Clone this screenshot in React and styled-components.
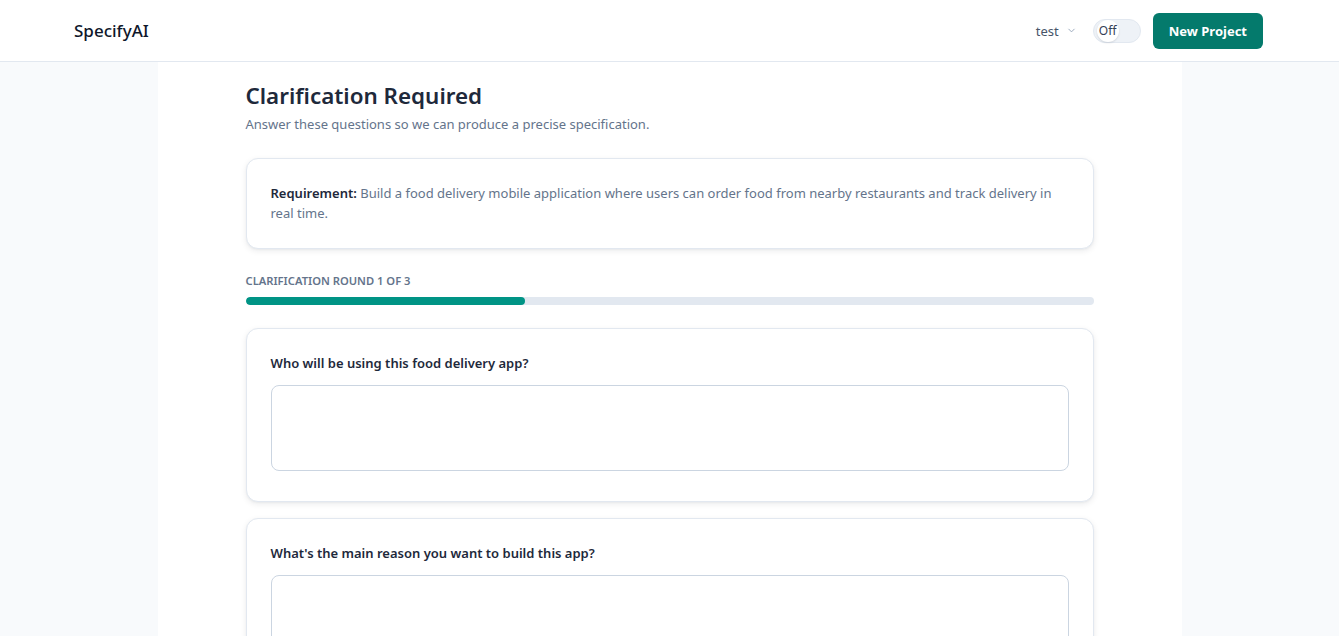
import React from "react";
import styled, { createGlobalStyle } from "styled-components";

const Global = createGlobalStyle`
  html, body { margin: 0; padding: 0; }
  body {
    font-family: "Noto Sans", "Open Sans", sans-serif;
    background: #f8fafc;
    color: #1e293b;
  }
  * { box-sizing: border-box; }
`;

const Header = styled.header`
  height: 62px;
  background: #ffffff;
  border-bottom: 1px solid #e2e8f0;
  display: flex;
  align-items: center;
  justify-content: space-between;
  padding: 0 76px 0 74px;
`;

const Logo = styled.div`
  font-size: 17px;
  font-weight: 500;
  color: #0f172a;
`;

const Right = styled.div`
  display: flex;
  align-items: center;
  gap: 12px;
`;

const UserMenu = styled.button`
  display: flex;
  align-items: center;
  gap: 7px;
  background: none;
  border: none;
  font-family: inherit;
  font-size: 13px;
  color: #475569;
  padding: 0;
  margin-right: 4px;
  cursor: pointer;
`;

const Toggle = styled.div`
  position: relative;
  width: 48px;
  height: 24px;
  border-radius: 12px;
  background: #eef2f7;
  border: 1px solid #e2e8f0;
`;

const Knob = styled.div`
  position: absolute;
  left: 3px;
  top: 0px;
  width: 22px;
  height: 22px;
  border-radius: 50%;
  background: #ffffff;
  box-shadow: 0 1px 2px rgba(15, 23, 42, 0.12);
  display: flex;
  align-items: center;
  justify-content: center;
  font-size: 12px;
  color: #334155;
`;

const PrimaryButton = styled.button`
  height: 36px;
  padding: 0 16px;
  border: none;
  border-radius: 6px;
  background: #047a6c;
  color: #ffffff;
  font-family: inherit;
  font-size: 13px;
  font-weight: 700;
  cursor: pointer;
`;

const Main = styled.main`
  width: 1024px;
  margin: 0 auto;
  background: #ffffff;
  padding: 19px 88px 40px;
  min-height: 600px;
`;

const Title = styled.h1`
  margin: 0;
  font-size: 22.4px;
  font-weight: 600;
  color: #1e293b;
  line-height: 30px;
`;

const Subtitle = styled.p`
  margin: 3px 0 0;
  font-size: 13px;
  color: #64748b;
  line-height: 20px;
`;

const Card = styled.section`
  background: #ffffff;
  border: 1px solid #e2e8f0;
  border-radius: 12px;
  box-shadow: 0 2px 6px rgba(15, 23, 42, 0.08), 0 1px 2px rgba(15, 23, 42, 0.04);
  padding: ${(p) => p.$pad || "24px"};
  margin-top: ${(p) => p.$mt || "16px"};
`;

const ReqText = styled.p`
  margin: 0;
  font-size: 13px;
  line-height: 20px;
  color: #64748b;
  strong {
    color: #1e293b;
    font-weight: 600;
  }
`;

const RoundLabel = styled.div`
  margin-top: 24px;
  font-size: 11.2px;
  font-weight: 600;
  color: #64748b;
  text-transform: uppercase;
  line-height: 16px;
`;

const Track = styled.div`
  margin-top: 8px;
  height: 8px;
  border-radius: 4px;
  background: #e2e8f0;
  overflow: hidden;
`;

const Fill = styled.div`
  height: 100%;
  border-radius: 4px;
  background: #009485;
`;

const Question = styled.label`
  display: block;
  font-size: 13px;
  font-weight: 600;
  color: #1e293b;
  line-height: 20px;
  margin-bottom: 12px;
`;

const TextArea = styled.textarea`
  display: block;
  width: 100%;
  height: 86px;
  margin-bottom: 6px;
  border: 1px solid #cbd5e1;
  border-radius: 8px;
  resize: none;
  font-family: inherit;
  font-size: 13px;
  padding: 10px 12px;
  outline: none;
`;

const questions = [
  "Who will be using this food delivery app?",
  "What's the main reason you want to build this app?",
];

export default function App() {
  return (
    <>
      <Global />
      <Header>
        <Logo>SpecifyAI</Logo>
        <Right>
          <UserMenu>
            test
            <svg width="11" height="11" viewBox="0 0 24 24" fill="none" stroke="#94a3b8" strokeWidth="2" strokeLinecap="round" strokeLinejoin="round">
              <path d="m6 9 6 6 6-6" />
            </svg>
          </UserMenu>
          <Toggle>
            <Knob>Off</Knob>
          </Toggle>
          <PrimaryButton>New Project</PrimaryButton>
        </Right>
      </Header>
      <Main>
        <Title>Clarification Required</Title>
        <Subtitle>Answer these questions so we can produce a precise specification.</Subtitle>
        <Card $mt="24px" $pad="24px 24px 25px">
          <ReqText>
            <strong>Requirement:</strong> Build a food delivery mobile application where users can order food from nearby restaurants and track delivery in real time.
          </ReqText>
        </Card>
        <RoundLabel>Clarification Round 1 of 3</RoundLabel>
        <Track>
          <Fill style={{ width: `${(1 / 3) * 100 - 0.4}%` }} />
        </Track>
        <Card $mt="23px">
          <Question>{questions[0]}</Question>
          <TextArea />
        </Card>
        {questions.slice(1).map((q) => (
          <Card key={q}>
            <Question>{q}</Question>
            <TextArea />
          </Card>
        ))}
      </Main>
    </>
  );
}
